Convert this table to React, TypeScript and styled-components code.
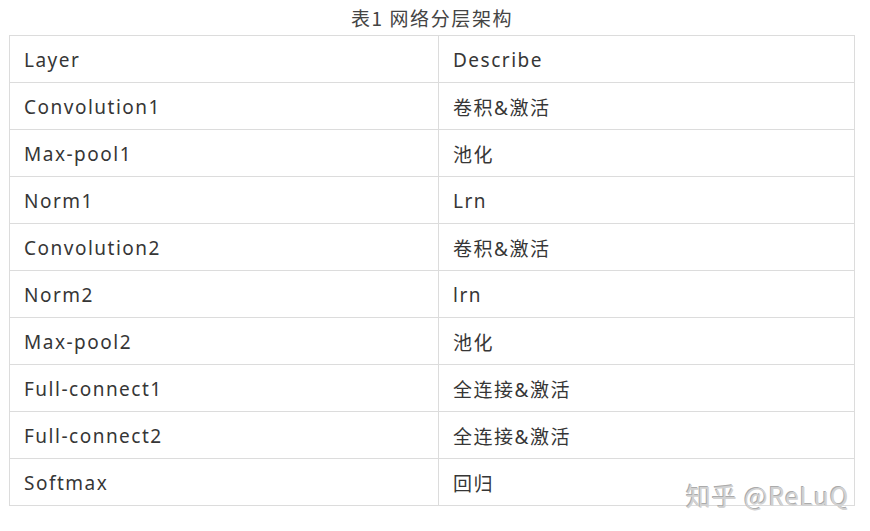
import React from "react";
import styled, { createGlobalStyle } from "styled-components";

const Global = createGlobalStyle`
  html, body { margin: 0; padding: 0; background: #fff; }
  body { font-family: "Noto Sans", "Noto Sans CJK SC", sans-serif; }
`;

const Page = styled.div`
  position: relative;
  width: 870px;
  height: 531px;
  overflow: hidden;
  background: #fff;
`;

const Caption = styled.div`
  margin-left: 9px;
  width: 846px;
  height: 35px;
  display: flex;
  align-items: center;
  justify-content: center;
  font-size: 19px;
  letter-spacing: 1.6px;
  color: #444;
  font-family: "Noto Sans CJK SC", "Noto Sans", sans-serif;
`;

const Table = styled.table`
  margin-left: 9px;
  width: 846px;
  border-collapse: collapse;
  table-layout: fixed;
`;

const Cell = styled.td<{ $first?: boolean }>`
  box-sizing: border-box;
  height: 47px;
  padding: 2px 14px 0;
  border: 1px solid #dcdcdc;
  font-size: 19px;
  letter-spacing: 1.5px;
  color: #363636;
  width: ${(p) => (p.$first ? "429px" : "auto")};
  font-family: "Noto Sans", "Noto Sans CJK SC", sans-serif;
  vertical-align: middle;
  white-space: nowrap;
`;

const Watermark = styled.div`
  position: absolute;
  right: 21px;
  bottom: 23px;
  font-size: 25px;
  line-height: 26px;
  letter-spacing: 0.8px;
  color: #d2d2d2;
  text-shadow: -1px -1px 0 #ababab;
  font-family: "Noto Sans CJK SC", "Noto Sans", sans-serif;
`;

const rows: [string, string][] = [
  ["Layer", "Describe"],
  ["Convolution1", "卷积&激活"],
  ["Max-pool1", "池化"],
  ["Norm1", "Lrn"],
  ["Convolution2", "卷积&激活"],
  ["Norm2", "lrn"],
  ["Max-pool2", "池化"],
  ["Full-connect1", "全连接&激活"],
  ["Full-connect2", "全连接&激活"],
  ["Softmax", "回归"],
];

export default function App() {
  return (
    <Page>
      <Global />
      <Caption>表1 网络分层架构</Caption>
      <Table>
        <tbody>
          {rows.map(([a, b]) => (
            <tr key={a}>
              <Cell $first>{a}</Cell>
              <Cell>{b}</Cell>
            </tr>
          ))}
        </tbody>
      </Table>
      <Watermark>知乎 @ReLuQ</Watermark>
    </Page>
  );
}
